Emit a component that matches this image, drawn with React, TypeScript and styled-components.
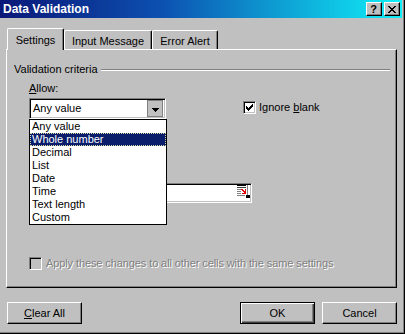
import React from "react";
import styled, { createGlobalStyle, css } from "styled-components";

const Global = createGlobalStyle`
  html, body { margin: 0; padding: 0; background: #c0c0c0; }
  body { font-family: "Liberation Sans", Arial, sans-serif; font-size: 11px; color: #000; }
  * { box-sizing: border-box; }
  u { text-decoration: underline; text-underline-offset: 1px; }
`;

const Window = styled.div`
  width: 405px;
  height: 334px;
  background: #c0c0c0;
  border-right: 1px solid #000;
  border-bottom: 1px solid #000;
  box-shadow: inset -1px -1px 0 #808080;
  display: flex;
  flex-direction: column;
`;

const TitleBar = styled.div`
  height: 18px;
  margin-right: 2px;
  padding: 0 2px 0 3px;
  display: flex;
  align-items: center;
  justify-content: space-between;
  background: linear-gradient(90deg, #0a1878 0%, #0c50b0 40%, #10f0f8 100%);
`;

const TitleText = styled.div`
  color: #fff;
  font-weight: bold;
  font-size: 12px;
  line-height: 14px;
`;

const TitleButtons = styled.div`
  display: flex;
  gap: 2px;
`;

const TitleButton = styled.div`
  width: 16px;
  height: 14px;
  background: #c0c0c0;
  border-top: 1px solid #fff;
  border-left: 1px solid #fff;
  border-right: 1px solid #000;
  border-bottom: 1px solid #000;
  box-shadow: inset -1px -1px 0 #808080;
  display: flex;
  align-items: center;
  justify-content: center;
  font-weight: bold;
  font-size: 11px;
  line-height: 11px;
  padding-right: 1px;
`;

const Body = styled.div`
  flex: 1;
  display: flex;
  flex-direction: column;
  padding: 0 7px 0 6px;
`;

const TabStrip = styled.div`
  margin-top: 10px;
  height: 21px;
  display: flex;
  align-items: flex-end;
  padding-left: 1px;
`;

const Tab = styled.div<{ $active?: boolean; $w: number }>`
  width: ${(p) => p.$w}px;
  height: 19px;
  background: #c0c0c0;
  border-top: 1px solid #fff;
  border-left: 1px solid #fff;
  border-right: 1px solid #000;
  border-radius: 2px 2px 0 0;
  box-shadow: inset -1px 0 0 #808080;
  display: flex;
  align-items: center;
  justify-content: center;
  padding-top: 2px;
  ${(p) =>
    p.$active &&
    css`
      height: 22px;
      margin-bottom: -1px;
      position: relative;
      z-index: 1;
      padding-top: 0;
    `}
`;

const Panel = styled.div`
  position: relative;
  height: 239px;
  border-top: 1px solid #fff;
  border-left: 1px solid #fff;
  border-right: 1px solid #000;
  border-bottom: 1px solid #000;
  box-shadow: inset -1px -1px 0 #808080;
  padding: 0 6px 0 7px;
  display: flex;
  flex-direction: column;
`;

const GroupHeader = styled.div`
  margin-top: 13px;
  height: 13px;
  line-height: 13px;
  display: flex;
  align-items: center;
`;

const GroupLine = styled.div`
  flex: 1;
  margin-left: 3px;
  margin-top: 1px;
  border-top: 1px solid #808080;
  border-bottom: 1px solid #fff;
`;

const Section = styled.div`
  padding-left: 15px;
  display: flex;
  flex-direction: column;
`;

const FieldLabel = styled.div`
  margin-top: 6px;
  height: 13px;
  line-height: 13px;
`;

const AllowRow = styled.div`
  margin-top: 3px;
  display: flex;
  align-items: flex-start;
`;

const sunken = css`
  border: 1px solid;
  border-color: #808080 #fff #fff #808080;
  box-shadow: inset 1px 1px 0 #000, inset -1px -1px 0 #c0c0c0;
`;

const ComboWrap = styled.div`
  position: relative;
  width: 137px;
`;

const Combo = styled.div`
  ${sunken};
  height: 21px;
  background: #fff;
  display: flex;
  align-items: center;
  padding: 2px 2px 2px 3px;
  line-height: 13px;
`;

const ComboText = styled.div`
  flex: 1;
`;

const DropButton = styled.div`
  width: 16px;
  height: 17px;
  background: #c0c0c0;
  border: 1px solid #808080;
  display: flex;
  align-items: center;
  justify-content: center;
  padding: 2px 0 0 1px;
`;

const ListBox = styled.div`
  position: absolute;
  top: 100%;
  left: 0;
  width: 138px;
  background: #fff;
  border: 1px solid #000;
  z-index: 2;
  display: flex;
  flex-direction: column;
`;

const ListItem = styled.div<{ $selected?: boolean }>`
  height: 13px;
  line-height: 11px;
  padding-left: 1px;
  border: 1px solid transparent;
  white-space: nowrap;
  ${(p) =>
    p.$selected &&
    css`
      background: #0a1e6c;
      color: #fff;
      border: 1px dotted #d8d8a0;
    `}
`;

const CheckRow = styled.label<{ $disabled?: boolean; $gap: number }>`
  display: flex;
  align-items: center;
  gap: ${(p) => p.$gap}px;
  height: 13px;
  line-height: 13px;
  ${(p) =>
    p.$disabled &&
    css`
      color: #808080;
      text-shadow: 1px 1px 0 #fff;
      letter-spacing: -0.1px;
    `}
`;

const IgnoreWrap = styled.div`
  margin-left: 77px;
  margin-top: 3px;
`;

const CheckBox = styled.div<{ $disabled?: boolean }>`
  ${sunken};
  width: 13px;
  height: 13px;
  background: ${(p) => (p.$disabled ? "#c0c0c0" : "#fff")};
  display: flex;
  align-items: center;
  justify-content: center;
  flex-shrink: 0;
`;

const RefBox = styled.div`
  ${sunken};
  margin-top: 64px;
  width: 223px;
  height: 20px;
  background: #fff;
  display: flex;
  justify-content: flex-end;
  align-items: flex-start;
  padding: 1px 1px 0 0;
`;

const ApplyWrap = styled.div`
  margin-top: 54px;
`;

const ButtonRow = styled.div`
  margin-top: 14px;
  display: flex;
  justify-content: space-between;
  padding-left: 1px;
`;

const ButtonGroup = styled.div`
  display: flex;
  gap: 7px;
`;

const Button = styled.div<{ $default?: boolean }>`
  width: 75px;
  height: 22px;
  background: #c0c0c0;
  border-top: 1px solid #fff;
  border-left: 1px solid #fff;
  border-right: 1px solid #000;
  border-bottom: 1px solid #000;
  box-shadow: inset -1px -1px 0 #808080;
  display: flex;
  align-items: center;
  justify-content: center;
  line-height: 13px;
  ${(p) =>
    p.$default &&
    css`
      border: 1px solid #000;
      box-shadow: inset 1px 1px 0 #fff, inset -1px -1px 0 #404040, inset -2px -2px 0 #808080;
    `}
`;

const CheckMark = () => (
  <svg width="7" height="7" viewBox="0 0 7 7" shapeRendering="crispEdges">
    <path d="M6 0h1v1h-1zM5 1h2v1h-2zM0 2h1v1h-1zM4 2h3v1h-3zM0 3h2v1h-2zM3 3h3v1h-3zM0 4h5v1h-5zM1 5h3v1h-3zM2 6h1v1h-1z" fill="#000" />
  </svg>
);

const Arrow = () => (
  <svg width="7" height="4" viewBox="0 0 7 4" shapeRendering="crispEdges">
    <path d="M0 0h7v1h-7zM1 1h5v1h-5zM2 2h3v1h-3zM3 3h1v1h-1z" fill="#000" />
  </svg>
);

const CloseGlyph = () => (
  <svg width="8" height="7" viewBox="0 0 8 7" shapeRendering="crispEdges">
    <path d="M0 0h2v1h-2zM6 0h2v1h-2zM1 1h2v1h-2zM5 1h2v1h-2zM2 2h4v1h-4zM3 3h2v1h-2zM2 4h4v1h-4zM1 5h2v1h-2zM5 5h2v1h-2zM0 6h2v1h-2zM6 6h2v1h-2z" fill="#000" />
  </svg>
);

const RangeIcon = () => (
  <svg width="13" height="13" viewBox="0 0 13 13" shapeRendering="crispEdges">
    <rect x="0" y="0" width="13" height="13" fill="#fff" />
    <rect x="0" y="0" width="9" height="1" fill="#000" />
    <rect x="0" y="2" width="9" height="1" fill="#404040" />
    <rect x="0" y="4" width="5" height="1" fill="#808080" />
    <rect x="0" y="6" width="4" height="1" fill="#808080" />
    <rect x="0" y="8" width="4" height="1" fill="#808080" />
    <rect x="0" y="10" width="8" height="1" fill="#808080" />
    <path d="M4 4h2v1h-2zM5 5h2v1h-2zM6 6h2v1h-2zM7 7h2v1h-2zM8 4h1v4h-1zM5 8h4v1h-4z" fill="#e00000" />
    <rect x="10" y="0" width="1" height="13" fill="#808080" />
    <rect x="9" y="10" width="4" height="3" fill="#000" />
  </svg>
);

const items = ["Any value", "Whole number", "Decimal", "List", "Date", "Time", "Text length", "Custom"];

export default function App() {
  return (
    <>
      <Global />
      <Window>
        <TitleBar>
          <TitleText>Data Validation</TitleText>
          <TitleButtons>
            <TitleButton>?</TitleButton>
            <TitleButton>
              <CloseGlyph />
            </TitleButton>
          </TitleButtons>
        </TitleBar>
        <Body>
          <TabStrip>
            <Tab $active $w={57}>Settings</Tab>
            <Tab $w={88}>Input Message</Tab>
            <Tab $w={66}>Error Alert</Tab>
          </TabStrip>
          <Panel>
            <GroupHeader>
              Validation criteria
              <GroupLine />
            </GroupHeader>
            <Section>
              <FieldLabel>
                <u>A</u>llow:
              </FieldLabel>
              <AllowRow>
                <ComboWrap>
                  <Combo>
                    <ComboText>Any value</ComboText>
                    <DropButton>
                      <Arrow />
                    </DropButton>
                  </Combo>
                  <ListBox>
                    {items.map((it, i) => (
                      <ListItem key={it} $selected={i === 1}>
                        {it}
                      </ListItem>
                    ))}
                  </ListBox>
                </ComboWrap>
                <IgnoreWrap>
                  <CheckRow $gap={3}>
                    <CheckBox>
                      <CheckMark />
                    </CheckBox>
                    <span>
                      Ignore <u>b</u>lank
                    </span>
                  </CheckRow>
                </IgnoreWrap>
              </AllowRow>
              <RefBox>
                <RangeIcon />
              </RefBox>
              <ApplyWrap>
                <CheckRow $disabled $gap={4}>
                  <CheckBox $disabled />
                  <span>Apply these changes to all other cells with the same settings</span>
                </CheckRow>
              </ApplyWrap>
            </Section>
          </Panel>
          <ButtonRow>
            <Button>
              <span>
                <u>C</u>lear All
              </span>
            </Button>
            <ButtonGroup>
              <Button $default>OK</Button>
              <Button>Cancel</Button>
            </ButtonGroup>
          </ButtonRow>
        </Body>
      </Window>
    </>
  );
}
